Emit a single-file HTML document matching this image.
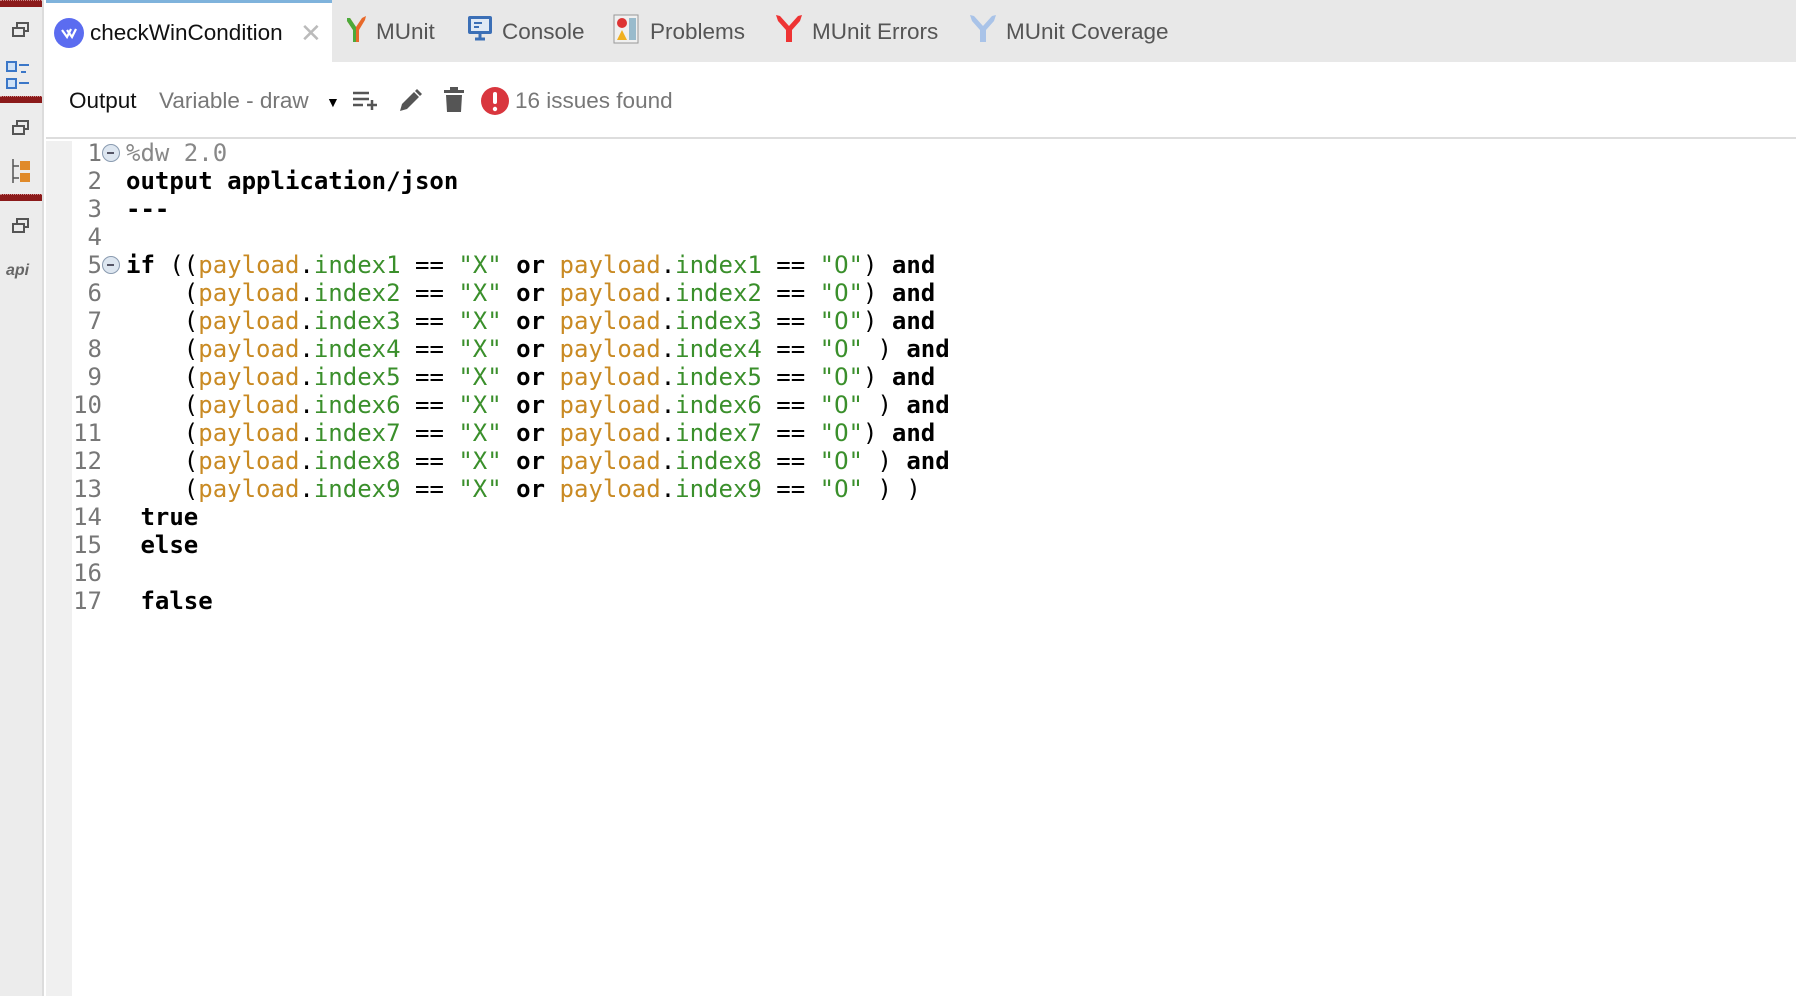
<!DOCTYPE html>
<html><head><meta charset="utf-8"><style>
*{margin:0;padding:0;box-sizing:border-box}
body{width:1796px;height:996px;overflow:hidden;background:#fff;font-family:"Liberation Sans",Arial,sans-serif;position:relative}
#side{position:absolute;left:0;top:0;width:44px;height:996px;background:#ececec;border-right:2px solid #dcdcdc}
.bar{position:absolute;left:0;width:42px;height:7px;background:#8b1a1a;border-top:1px dotted #c88}
#tabs{position:absolute;left:46px;top:0;right:0;height:62px;background:#e8e8e8}
.tab{position:absolute;top:0;height:62px;font-size:22.5px;color:#555;line-height:64px;white-space:nowrap}
#active{left:0;width:286px;background:#fff;border-top:3px solid #7fb3dc;color:#111;line-height:60px}
#tb{position:absolute;left:46px;top:62px;right:0;height:77px;border-bottom:2px solid #ddd;font-size:22.5px}
#tb span{position:absolute;top:26px}
#gut{position:absolute;left:46px;top:141px;width:26px;bottom:0;background:#f0f0f0}
#code{position:absolute;left:72px;top:139px;font-family:"DejaVu Sans Mono","Liberation Mono",monospace;font-size:24px;line-height:28px;white-space:pre;color:#000}
.ln{display:inline-block;width:30px;text-align:right;color:#777;margin-right:24px}
.k{font-weight:bold}.p{color:#c98a23}.g{color:#3a8f2b}.c{color:#888}
.fold{position:absolute;left:102px;width:18px;height:18px;border:1.5px solid #8a9bb0;border-radius:50%;background:#dde6f0}
.fold:after{content:"";position:absolute;left:4px;top:7px;width:7px;height:2px;background:#556}
</style></head><body>
<div id="side">
<div class="bar" style="top:0"></div>
<div class="bar" style="top:96px"></div>
<div class="bar" style="top:194px"></div>
<svg style="position:absolute;left:12px;top:22px" width="18" height="16"><rect x="5" y="1" width="11" height="8" fill="none" stroke="#555" stroke-width="2"/><rect x="1" y="6" width="11" height="8" fill="#ececec" stroke="#555" stroke-width="2"/></svg>
<svg style="position:absolute;left:6px;top:60px" width="28" height="32"><rect x="1" y="2" width="9" height="9" fill="#cfe2f7" stroke="#3b77c8" stroke-width="2"/><rect x="1" y="19" width="9" height="9" fill="#cfe2f7" stroke="#3b77c8" stroke-width="2"/><path d="M13 5h10M15 12h5M13 23h10" stroke="#3b77c8" stroke-width="2"/></svg>
<svg style="position:absolute;left:12px;top:120px" width="18" height="16"><rect x="5" y="1" width="11" height="8" fill="none" stroke="#555" stroke-width="2"/><rect x="1" y="6" width="11" height="8" fill="#ececec" stroke="#555" stroke-width="2"/></svg>
<svg style="position:absolute;left:10px;top:158px" width="22" height="26"><path d="M3 1v24M3 8h6M3 20h6" stroke="#555" stroke-width="1.5"/><rect x="10" y="3" width="10" height="9" fill="#e08a2a"/><rect x="10" y="15" width="10" height="9" fill="#e08a2a"/></svg>
<svg style="position:absolute;left:12px;top:218px" width="18" height="16"><rect x="5" y="1" width="11" height="8" fill="none" stroke="#555" stroke-width="2"/><rect x="1" y="6" width="11" height="8" fill="#ececec" stroke="#555" stroke-width="2"/></svg>
<div style="position:absolute;left:6px;top:262px;font-size:16px;font-weight:bold;color:#666;font-style:italic">api</div>
</div>
<div id="tabs">
<div class="tab" id="active"><svg style="position:absolute;left:8px;top:15px" width="30" height="30"><circle cx="15" cy="15" r="15" fill="#5b6cf0"/><path d="M8 12l5 7 4-8M13 12l5 7 4-8" stroke="#fff" stroke-width="2.2" fill="none"/></svg><span style="position:absolute;left:44px">checkWinCondition</span><span style="position:absolute;left:254px;color:#bbb;font-size:26px">✕</span></div>
<div class="tab" style="left:300px"><svg style="position:absolute;left:0;top:16px" width="24" height="28"><path d="M1 2l3 0 6 9 6-9 4-2-1 4-6 10v12h-6V14L1 5z" fill="#e8692a"/><path d="M1 2l3 0 6 9v15H7V14L1 5z" fill="#4caa3a"/></svg><span style="position:absolute;left:30px">MUnit</span></div>
<div class="tab" style="left:421px"><svg style="position:absolute;left:0;top:15px" width="26" height="28"><rect x="1" y="1" width="24" height="18" rx="2" fill="#3b6fb6"/><rect x="4" y="4" width="18" height="12" fill="#dfe9f5"/><path d="M7 8h8M7 12h5" stroke="#3b6fb6" stroke-width="2"/><path d="M8 24h10M13 19v5" stroke="#3b6fb6" stroke-width="3"/></svg><span style="position:absolute;left:35px">Console</span></div>
<div class="tab" style="left:567px"><svg style="position:absolute;left:0;top:14px" width="26" height="30"><rect x="1" y="1" width="24" height="28" fill="#f0f0f0" stroke="#999"/><circle cx="9" cy="9" r="5" fill="#d33"/><path d="M4 26l5-10 5 10z" fill="#f0b020"/><rect x="16" y="4" width="7" height="22" fill="#9bc"/></svg><span style="position:absolute;left:37px">Problems</span></div>
<div class="tab" style="left:729px"><svg style="position:absolute;left:0;top:14px" width="28" height="30"><path d="M1 1l4 1 9 10 9-10 4-1-2 6-8 9v12h-6V16L3 7z" fill="#e33"/></svg><span style="position:absolute;left:37px">MUnit Errors</span></div>
<div class="tab" style="left:923px"><svg style="position:absolute;left:0;top:14px" width="28" height="30"><path d="M1 1l4 1 9 10 9-10 4-1-2 6-8 9v12h-6V16L3 7z" fill="#a9c3e8"/></svg><span style="position:absolute;left:37px">MUnit Coverage</span></div>
</div>
<div id="tb">
<span style="left:23px;color:#111">Output</span>
<span style="left:113px;color:#777">Variable - draw</span>
<span style="left:280px;font-size:14px;top:32px">▼</span>
<svg style="position:absolute;left:306px;top:28px" width="28" height="22"><path d="M1 3h16M1 9h16M1 15h10M20 10v10M15 15h10" stroke="#555" stroke-width="2.5"/></svg>
<svg style="position:absolute;left:351px;top:26px" width="26" height="26"><path d="M3 23l2-7L17 4l5 5L10 21z" fill="#555"/><path d="M18 3l2-2 5 5-2 2z" fill="#555"/></svg>
<svg style="position:absolute;left:397px;top:25px" width="22" height="26"><rect x="1" y="3" width="20" height="3" fill="#555"/><rect x="7" y="0" width="8" height="4" fill="#555"/><path d="M3 8h16l-1 17H4z" fill="#555"/></svg>
<svg style="position:absolute;left:435px;top:25px" width="28" height="28"><circle cx="14" cy="14" r="14" fill="#d9363e"/><rect x="12" y="5" width="4" height="12" rx="2" fill="#fff"/><circle cx="14" cy="22" r="2.2" fill="#fff"/></svg>
<span style="left:469px;color:#777">16 issues found</span>
</div>
<div id="gut"></div>
<div class="fold" style="top:144px"></div>
<div class="fold" style="top:256px"></div>
<div id="code"><span class="ln">1</span><span class="c">%dw 2.0</span>
<span class="ln">2</span><span class="k">output application/json</span>
<span class="ln">3</span><span class="k">---</span>
<span class="ln">4</span>
<span class="ln">5</span><span class="k">if</span> ((<span class="p">payload</span>.<span class="g">index1</span> == <span class="g">"X"</span> <span class="k">or</span> <span class="p">payload</span>.<span class="g">index1</span> == <span class="g">"O"</span>) <span class="k">and</span>
<span class="ln">6</span>    (<span class="p">payload</span>.<span class="g">index2</span> == <span class="g">"X"</span> <span class="k">or</span> <span class="p">payload</span>.<span class="g">index2</span> == <span class="g">"O"</span>) <span class="k">and</span>
<span class="ln">7</span>    (<span class="p">payload</span>.<span class="g">index3</span> == <span class="g">"X"</span> <span class="k">or</span> <span class="p">payload</span>.<span class="g">index3</span> == <span class="g">"O"</span>) <span class="k">and</span>
<span class="ln">8</span>    (<span class="p">payload</span>.<span class="g">index4</span> == <span class="g">"X"</span> <span class="k">or</span> <span class="p">payload</span>.<span class="g">index4</span> == <span class="g">"O"</span> ) <span class="k">and</span>
<span class="ln">9</span>    (<span class="p">payload</span>.<span class="g">index5</span> == <span class="g">"X"</span> <span class="k">or</span> <span class="p">payload</span>.<span class="g">index5</span> == <span class="g">"O"</span>) <span class="k">and</span>
<span class="ln">10</span>    (<span class="p">payload</span>.<span class="g">index6</span> == <span class="g">"X"</span> <span class="k">or</span> <span class="p">payload</span>.<span class="g">index6</span> == <span class="g">"O"</span> ) <span class="k">and</span>
<span class="ln">11</span>    (<span class="p">payload</span>.<span class="g">index7</span> == <span class="g">"X"</span> <span class="k">or</span> <span class="p">payload</span>.<span class="g">index7</span> == <span class="g">"O"</span>) <span class="k">and</span>
<span class="ln">12</span>    (<span class="p">payload</span>.<span class="g">index8</span> == <span class="g">"X"</span> <span class="k">or</span> <span class="p">payload</span>.<span class="g">index8</span> == <span class="g">"O"</span> ) <span class="k">and</span>
<span class="ln">13</span>    (<span class="p">payload</span>.<span class="g">index9</span> == <span class="g">"X"</span> <span class="k">or</span> <span class="p">payload</span>.<span class="g">index9</span> == <span class="g">"O"</span> ) )
<span class="ln">14</span> <span class="k">true</span>
<span class="ln">15</span> <span class="k">else</span>
<span class="ln">16</span>
<span class="ln">17</span> <span class="k">false</span></div>
</body></html>
